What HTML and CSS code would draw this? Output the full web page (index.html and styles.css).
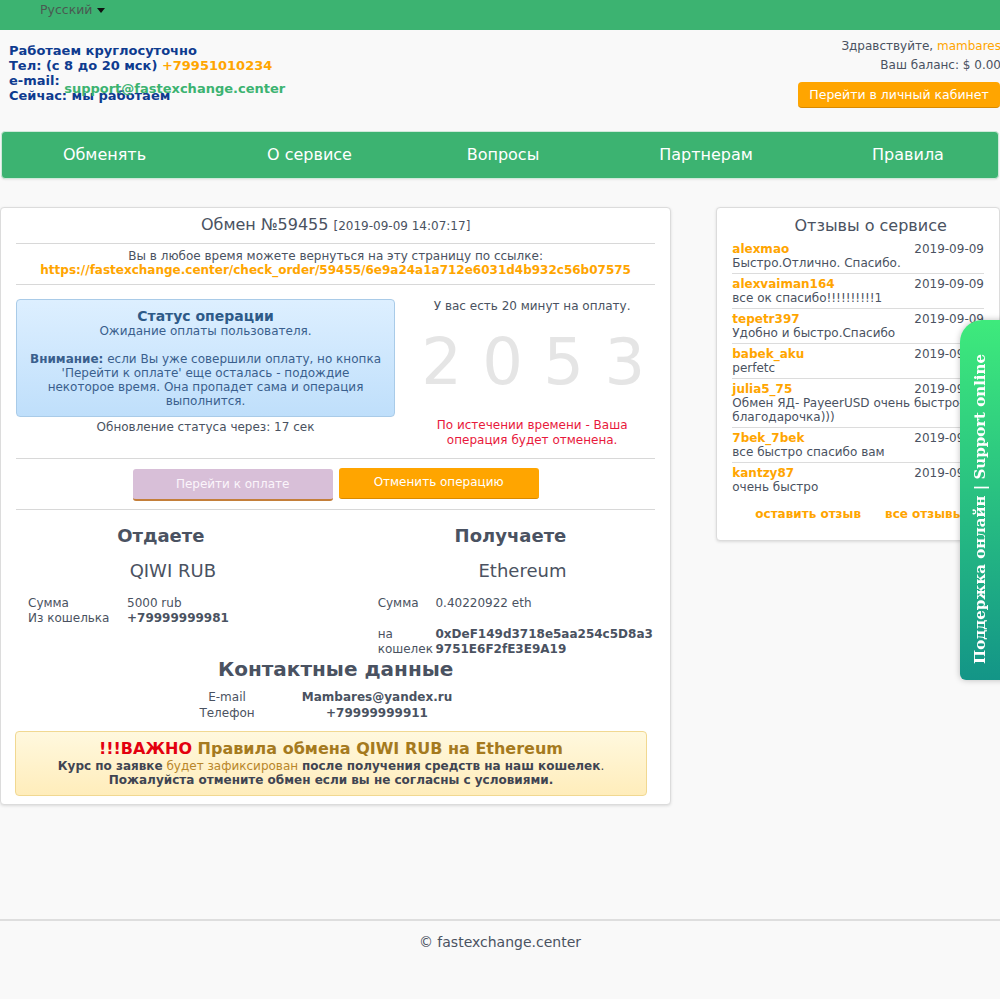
FILE: index.html
```html
<!DOCTYPE html>
<html lang="ru">
<head>
<meta charset="utf-8">
<title>Обмен №59455</title>
<link rel="stylesheet" href="styles.css">
</head>
<body>
<div class="topbar">
  <span class="lang">Русский <span class="caret"></span></span>
</div>

<header class="header">
  <div class="contacts">
    <div>Работаем круглосуточно</div>
    <div>Тел: (с 8 до 20 мск) <span class="phone">+79951010234</span></div>
    <div>e-mail: <span class="email">support@fastexchange.center</span></div>
    <div>Сейчас: мы работаем</div>
  </div>
  <div class="account">
    <div>Здравствуйте, <span class="user">mambares</span></div>
    <div class="balance">Ваш баланс: $ 0.00</div>
    <a class="btn-cabinet">Перейти в личный кабинет</a>
  </div>
</header>

<nav class="nav">
  <a>Обменять</a>
  <a>О сервисе</a>
  <a>Вопросы</a>
  <a>Партнерам</a>
  <a>Правила</a>
</nav>

<div class="content">
  <main class="card order">
    <h1 class="order-title">Обмен №59455 <small>[2019-09-09 14:07:17]</small></h1>
    <div class="order-link">
      <div>Вы в любое время можете вернуться на эту страницу по ссылке:</div>
      <a>https://fastexchange.center/check_order/59455/6e9a24a1a712e6031d4b932c56b07575</a>
    </div>

    <div class="status-row">
      <div class="status-col">
        <div class="status-box">
          <div class="status-head">Статус операции</div>
          <div>Ожидание оплаты пользователя.</div>
          <div class="status-note"><b>Внимание:</b> если Вы уже совершили оплату, но кнопка 'Перейти к оплате' еще осталась - подождие некоторое время. Она пропадет сама и операция выполнится.</div>
        </div>
        <div class="refresh">Обновление статуса через: 17 сек</div>
      </div>
      <div class="timer-col">
        <div class="timer-info">У вас есть 20 минут на оплату.</div>
        <div class="timer">2 0 5 3</div>
        <div class="timer-warn">По истечении времени - Ваша операция будет отменена.</div>
      </div>
    </div>

    <div class="actions">
      <a class="btn btn-pay">Перейти к оплате</a>
      <a class="btn btn-cancel">Отменить операцию</a>
    </div>

    <div class="sides">
      <div class="side">
        <h2 class="side-title give">Отдаете</h2>
        <div class="side-name give-name">QIWI RUB</div>
        <table class="kv kv-give">
          <tr><td class="k">Сумма</td><td>5000 rub</td></tr>
          <tr><td class="k">Из кошелька</td><td><b>+79999999981</b></td></tr>
        </table>
      </div>
      <div class="side">
        <h2 class="side-title get">Получаете</h2>
        <div class="side-name get-name">Ethereum</div>
        <table class="kv kv-get">
          <tr><td class="k">Сумма</td><td>0.40220922 eth</td></tr>
          <tr class="gap"><td class="k">на кошелек</td><td class="addr"><b>0xDeF149d3718e5aa254c5D8a3 9751E6F2fE3E9A19</b></td></tr>
        </table>
      </div>
    </div>

    <h2 class="contact-title">Контактные данные</h2>
    <table class="contact">
      <tr><td class="c1">E-mail</td><td class="c2"><b>Mambares@yandex.ru</b></td></tr>
      <tr><td class="c1">Телефон</td><td class="c2"><b>+79999999911</b></td></tr>
    </table>

    <div class="notice">
      <div class="notice-head"><span class="red">!!!ВАЖНО</span> Правила обмена QIWI RUB на Ethereum</div>
      <div><b>Курс по заявке</b> <span class="brown">будет зафиксирован</span> <b>после получения средств на наш кошелек</b>.</div>
      <div><b>Пожалуйста отмените обмен если вы не согласны с условиями.</b></div>
    </div>
  </main>

  <aside class="card reviews">
    <h3 class="reviews-title">Отзывы о сервисе</h3>
    <div class="review"><div class="r-top"><span class="r-name">alexmao</span><span>2019-09-09</span></div><div>Быстро.Отлично. Спасибо.</div></div>
    <div class="review"><div class="r-top"><span class="r-name">alexvaiman164</span><span>2019-09-09</span></div><div>все ок спасибо!!!!!!!!!!1</div></div>
    <div class="review"><div class="r-top"><span class="r-name">tepetr397</span><span>2019-09-09</span></div><div>Удобно и быстро.Спасибо</div></div>
    <div class="review"><div class="r-top"><span class="r-name">babek_aku</span><span>2019-09-09</span></div><div>perfetc</div></div>
    <div class="review"><div class="r-top"><span class="r-name">julia5_75</span><span>2019-09-09</span></div><div>Обмен ЯД- PayeerUSD очень быстро-благодарочка)))</div></div>
    <div class="review"><div class="r-top"><span class="r-name">7bek_7bek</span><span>2019-09-09</span></div><div>все быстро спасибо вам</div></div>
    <div class="review last"><div class="r-top"><span class="r-name">kantzy87</span><span>2019-09-09</span></div><div>очень быстро</div></div>
    <div class="r-links"><a>оставить отзыв</a><a>все отзывы</a></div>
  </aside>
</div>

<footer class="footer">© fastexchange.center</footer>

<div class="support"><span>Поддержка онлайн | Support online</span></div>
</body>
</html>
```

FILE: styles.css
```css
* { box-sizing: border-box; }
html, body { margin: 0; padding: 0; }
body {
  background: #f9f9f9;
  font-family: "DejaVu Sans", sans-serif;
  color: #4a5261;
  font-size: 12px;
  line-height: 1.2;
  min-height: 999px;
  overflow-x: hidden;
}
a { text-decoration: none; cursor: pointer; }

.topbar {
  background: #3cb371;
  height: 30px;
  padding-left: 40px;
}
.lang {
  display: inline-block;
  color: #4a5a52;
  font-size: 12.5px;
  line-height: 20px;
}
.caret {
  display: inline-block;
  width: 0; height: 0;
  border-left: 4px solid transparent;
  border-right: 4px solid transparent;
  border-top: 5px solid #111;
  vertical-align: middle;
  margin-left: 1px;
}

.header {
  display: flex;
  justify-content: space-between;
  padding: 13px 0 0 9px;
  height: 101px;
}
.contacts {
  font-weight: bold;
  font-size: 13px;
  line-height: 15px;
  color: #0e3b8f;
}
.phone { color: #ffa500; }
.email {
  color: #3cb371;
  position: relative;
  top: 8px;
}
.account {
  text-align: right;
  font-size: 12px;
  line-height: 19px;
  color: #4a5261;
  margin-top: -6px;
  margin-right: -1px;
}
.user { color: #ffa500; }
.btn-cabinet {
  display: inline-block;
  margin-top: 7px;
  margin-right: 1px;
  background: #ffa500;
  color: #fff;
  font-size: 12.5px;
  line-height: 25px;
  border-radius: 4px;
  border-bottom: 1px solid #d88a00;
  width: 202px;
  text-align: center;
  white-space: nowrap;
}

.nav {
  margin: 0 1px;
  background: #3cb371;
  border: 1px solid #cfe9da;
  border-radius: 4px;
  height: 48px;
  display: grid;
  grid-template-columns: 205px 205px 182px 224px 180px;
  align-items: center;
  text-align: center;
  box-shadow: 0 1px 2px rgba(0,0,0,0.08);
}
.nav a { color: #fff; font-size: 16px; }

.content {
  display: flex;
  align-items: flex-start;
  margin-top: 28px;
  padding-left: 0;
  gap: 45px;
}
.card {
  background: #fff;
  border: 1px solid #dcdcdc;
  border-radius: 4px;
  box-shadow: 0 1px 3px rgba(0,0,0,0.12);
}

.order {
  width: 672px;
  padding: 8px 15px 8px 15px;
}
.order-title {
  margin: 0;
  font-weight: normal;
  font-size: 16px;
  text-align: center;
  line-height: 18px;
  padding-bottom: 8px;
  border-bottom: 1px solid #d8d8d8;
}
.order-title small { font-size: 12px; }
.order-link {
  text-align: center;
  font-size: 12px;
  line-height: 14px;
  padding: 5px 0 7px;
  border-bottom: 1px solid #d8d8d8;
}
.order-link a { color: #ffa500; font-weight: bold; }

.status-row {
  display: flex;
  padding: 14px 0 10px;
  border-bottom: 1px solid #d8d8d8;
}
.status-col { width: 379px; text-align: center; }
.status-box {
  background: linear-gradient(#ddefff, #bfdffb);
  border: 1px solid #a9cbe8;
  border-radius: 4px;
  color: #3a5f8d;
  font-size: 12px;
  line-height: 14px;
  padding: 8px 10px 8px;
}
.status-head { font-weight: bold; font-size: 14px; line-height: 16px; color: #2e5a88; }
.status-note { margin-top: 14px; }
.refresh { font-size: 12px; margin-top: 3px; line-height: 15px; }
.timer-col { flex: 1; text-align: center; padding-left: 14px; }
.timer-info { font-size: 12px; line-height: 14px; margin-top: 0; }
.timer {
  font-size: 64px;
  color: #e5e5e5;
  line-height: 64px;
  margin-top: 17px;
  padding-left: 2px;
}
.timer-warn {
  color: #e8193c;
  font-size: 12px;
  line-height: 15px;
  margin-top: 24px;
  padding: 0 20px;
}

.actions {
  display: flex;
  justify-content: center;
  gap: 6px;
  padding: 9px 0 8px;
  border-bottom: 1px solid #d8d8d8;
}
.btn {
  width: 200px;
  height: 32px;
  line-height: 31px;
  text-align: center;
  color: #fff;
  font-size: 12px;
  border-radius: 3px;
}
.btn-pay { background: #d8bfd8; border-bottom: 2px solid #c47f3a; margin-top: 1px; color: #fbf5fb; }
.btn-cancel { background: #ffa500; border-bottom: 1px solid #d98900; height: 31px; line-height: 29px; }

.sides { display: flex; }
.side { width: 50%; }
.side-title {
  margin: 16px 0 0;
  font-size: 18px;
  line-height: 20px;
  text-align: center;
}
.give { padding-right: 30px; }
.get { padding-left: 30px; }
.side-name {
  font-size: 18px;
  line-height: 20px;
  margin-top: 15px;
  text-align: center;
}
.give-name { padding-right: 6px; }
.get-name { padding-left: 54px; }
.kv { border-collapse: collapse; margin-top: 15px; font-size: 12px; }
.kv td { padding: 0; line-height: 15px; vertical-align: top; }
.kv-give { margin-left: 12px; }
.kv-give .k { width: 99px; }
.kv-get { margin-left: 42px; }
.kv-get .k { width: 58px; }
.kv-get .gap td { padding-top: 16px; }
.addr { width: 220px; }

.contact-title {
  margin: 0;
  font-size: 20px;
  line-height: 24px;
  text-align: center;
}
.contact { border-collapse: collapse; margin: 8px 0 0 141px; font-size: 12px; }
.contact td { padding: 0; line-height: 16px; text-align: center; }
.contact .c1 { width: 140px; }
.contact .c2 { width: 160px; }

.notice {
  margin-top: 10px;
  width: 632px;
  margin-left: -1px;
  background: linear-gradient(#fff8de, #ffedbb);
  border: 1px solid #f1d891;
  border-radius: 4px;
  text-align: center;
  font-size: 12px;
  line-height: 14px;
  color: #3f4552;
  padding: 7px 0 8px;
}
.notice-head {
  font-weight: bold;
  font-size: 16px;
  line-height: 20px;
  color: #a57a1e;
}
.red { color: #e3000f; }
.brown { color: #b8862a; }

.reviews {
  width: 284px;
  padding: 8px 15px 19px;
}
.reviews-title {
  margin: 0 0 5px;
  padding-left: 25px;
  font-weight: normal;
  font-size: 16px;
  line-height: 20px;
  text-align: center;
}
.review {
  font-size: 12px;
  line-height: 14px;
  padding: 1px 0 3px;
  border-bottom: 1px solid #dcdcdc;
  margin-bottom: 2px;
}
.review.last { border-bottom: none; }
.r-top { display: flex; justify-content: space-between; }
.r-name { color: #ffa500; font-weight: bold; }
.r-links {
  display: flex;
  gap: 24px;
  padding-left: 23px;
  margin-top: 10px;
}
.r-links a { color: #ffa500; font-weight: bold; font-size: 12px; }

.footer {
  margin-top: 114px;
  border-top: 2px solid #dedede;
  text-align: center;
  font-size: 14px;
  padding-top: 13px;
}

.support {
  position: fixed;
  right: -10px;
  top: 320px;
  width: 50px;
  height: 360px;
  border-radius: 22px 0 0 6px;
  background: linear-gradient(#3eea7c, #139587);
  box-shadow: 0 0 6px rgba(0,0,0,0.25);
  display: flex;
  align-items: flex-end;
  justify-content: center;
  padding: 0 10px 16px 0;
}
.support span {
  writing-mode: vertical-rl;
  transform: rotate(180deg);
  font-family: "DejaVu Serif", serif;
  font-weight: bold;
  font-size: 15px;
  color: #fff;
  white-space: nowrap;
}
```
